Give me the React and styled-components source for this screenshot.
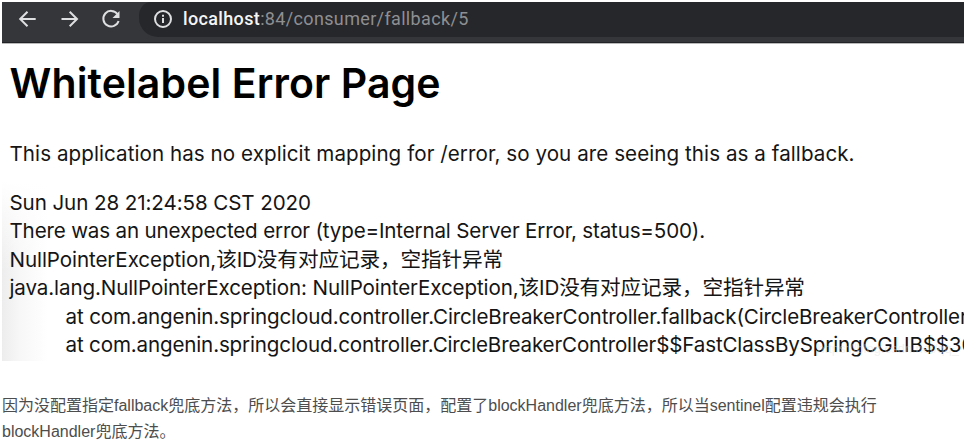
import React from "react";
import styled, { createGlobalStyle } from "styled-components";

const Global = createGlobalStyle`
  * { box-sizing: border-box; }
  body { margin: 0; background: #fff; overflow: hidden; }
`;
const Article = styled.main`
  padding: 2px 1px 0 2px;
  width: 965px;
  height: 448px;
  overflow: hidden;
`;
const Browser = styled.section`
  position: relative;
  height: 359px;
  overflow: hidden;
  font-family: Inter, "Noto Sans CJK SC", sans-serif;
  background:
    linear-gradient(to bottom, #fff 50%, rgba(255, 255, 255, 0) 75%),
    linear-gradient(to right, #ededed 0, #f7f7f7 18px, #fff 46px);
`;
const Toolbar = styled.header`
  display: flex;
  height: 42px;
  background: #35363a;
  border-bottom: 1px solid #b9b9b9;
  box-shadow: inset 0 -1px 0 #222327;
`;
const Nav = styled.nav`
  display: flex;
  flex: none;
  width: 137px;
  padding: 5px 0 0 14px;
  gap: 17.5px;
`;
const Icon = styled.svg`
  display: block;
  flex: none;
  width: 24px;
  height: 24px;
  fill: none;
  stroke: #dedfe1;
  stroke-width: 2;
`;
const Address = styled.div`
  display: flex;
  flex: 1;
  height: 35px;
  padding: 5px 0 0 12px;
  gap: 8px;
  background: #26272b;
  border-bottom-left-radius: 19px;
  border-top-left-radius: 12px 14px;
`;
const Url = styled.div`
  font: 400 18px/24px Roboto, sans-serif;
  letter-spacing: 0.35px;
  color: #8e8f92;
  white-space: pre;
`;
const Host = styled.span`
  color: #f5f5f5;
  font-weight: 500;
`;
const Page = styled.div`
  padding: 0 0 0 7.5px;
  color: #151515;
`;
const Title = styled.h1`
  margin: 14px 0 0;
  font-size: 41px;
  line-height: 50px;
  font-weight: 600;
  letter-spacing: 0.1px;
  color: #000;
  white-space: pre;
`;
const Line = styled.div`
  height: 28.5px;
  line-height: 28.5px;
  font-size: 20.6px;
  letter-spacing: ${(p) => p.$spacing || 0}px;
  margin-top: ${(p) => p.$top || 0}px;
  padding-left: ${(p) => (p.$indent ? 56 : 0)}px;
  white-space: pre;
`;
const Watermark = styled.span`
  position: absolute;
  right: 5px;
  bottom: 4px;
  font: 13px/16px "Liberation Sans", sans-serif;
  color: rgba(225, 225, 225, 0.45);
`;
const Caption = styled.p`
  margin: 32px 0 0;
  font: 400 16px/26px "Liberation Sans", "Noto Sans CJK SC", sans-serif;
  color: #4d4d4d;
  white-space: pre;
`;

export default function App() {
  return (
    <Article>
      <Global />
      <Browser>
        <Toolbar>
          <Nav>
            <Icon viewBox="0 0 24 24"><path d="M19.7 12H4.5M11.5 4.7L4.2 12l7.3 7.3" /></Icon>
            <Icon viewBox="0 0 24 24"><path d="M3.5 12h15.2M11.7 4.7L19 12l-7.3 7.3" /></Icon>
            <Icon viewBox="0 0 24 24">
              <path d="M18.4 7A7.8 7.8 0 1 0 19.6 14" />
              <path d="M20.5 4v7h-7z" fill="#dedfe1" stroke="none" />
            </Icon>
          </Nav>
          <Address>
            <Icon viewBox="0 0 24 24"><circle cx="12" cy="12" r="8" /><path d="M12 11v5M12 7.7v2" /></Icon>
            <Url><Host>localhost</Host>:84/consumer/fallback/5</Url>
          </Address>
        </Toolbar>
        <Page>
          <Title>Whitelabel Error Page</Title>
          <Line $top={32} $spacing={0.06}>This application has no explicit mapping for /error, so you are seeing this as a fallback.</Line>
          <Line $top={20} $spacing={-0.1}>Sun Jun 28 21:24:58 CST 2020</Line>
          <Line $spacing={-0.17}>There was an unexpected error (type=Internal Server Error, status=500).</Line>
          <Line $spacing={-0.09}>NullPointerException,该ID没有对应记录，空指针异常</Line>
          <Line $spacing={-0.12}>java.lang.NullPointerException: NullPointerException,该ID没有对应记录，空指针异常</Line>
          <Line $indent $spacing={-0.15}>at com.angenin.springcloud.controller.CircleBreakerController.fallback(CircleBreakerController</Line>
          <Line $indent $spacing={-0.16}>at com.angenin.springcloud.controller.CircleBreakerController$$FastClassBySpringCGLIB$$30</Line>
        </Page>
        <Watermark>https://blog.csdn.net/qq_</Watermark>
      </Browser>
      <Caption>
        因为没配置指定fallback兜底方法，所以会直接显示错误页面，配置了blockHandler兜底方法，所以当sentinel配置违规会执行{"\n"}blockHandler兜底方法。
      </Caption>
    </Article>
  );
}
